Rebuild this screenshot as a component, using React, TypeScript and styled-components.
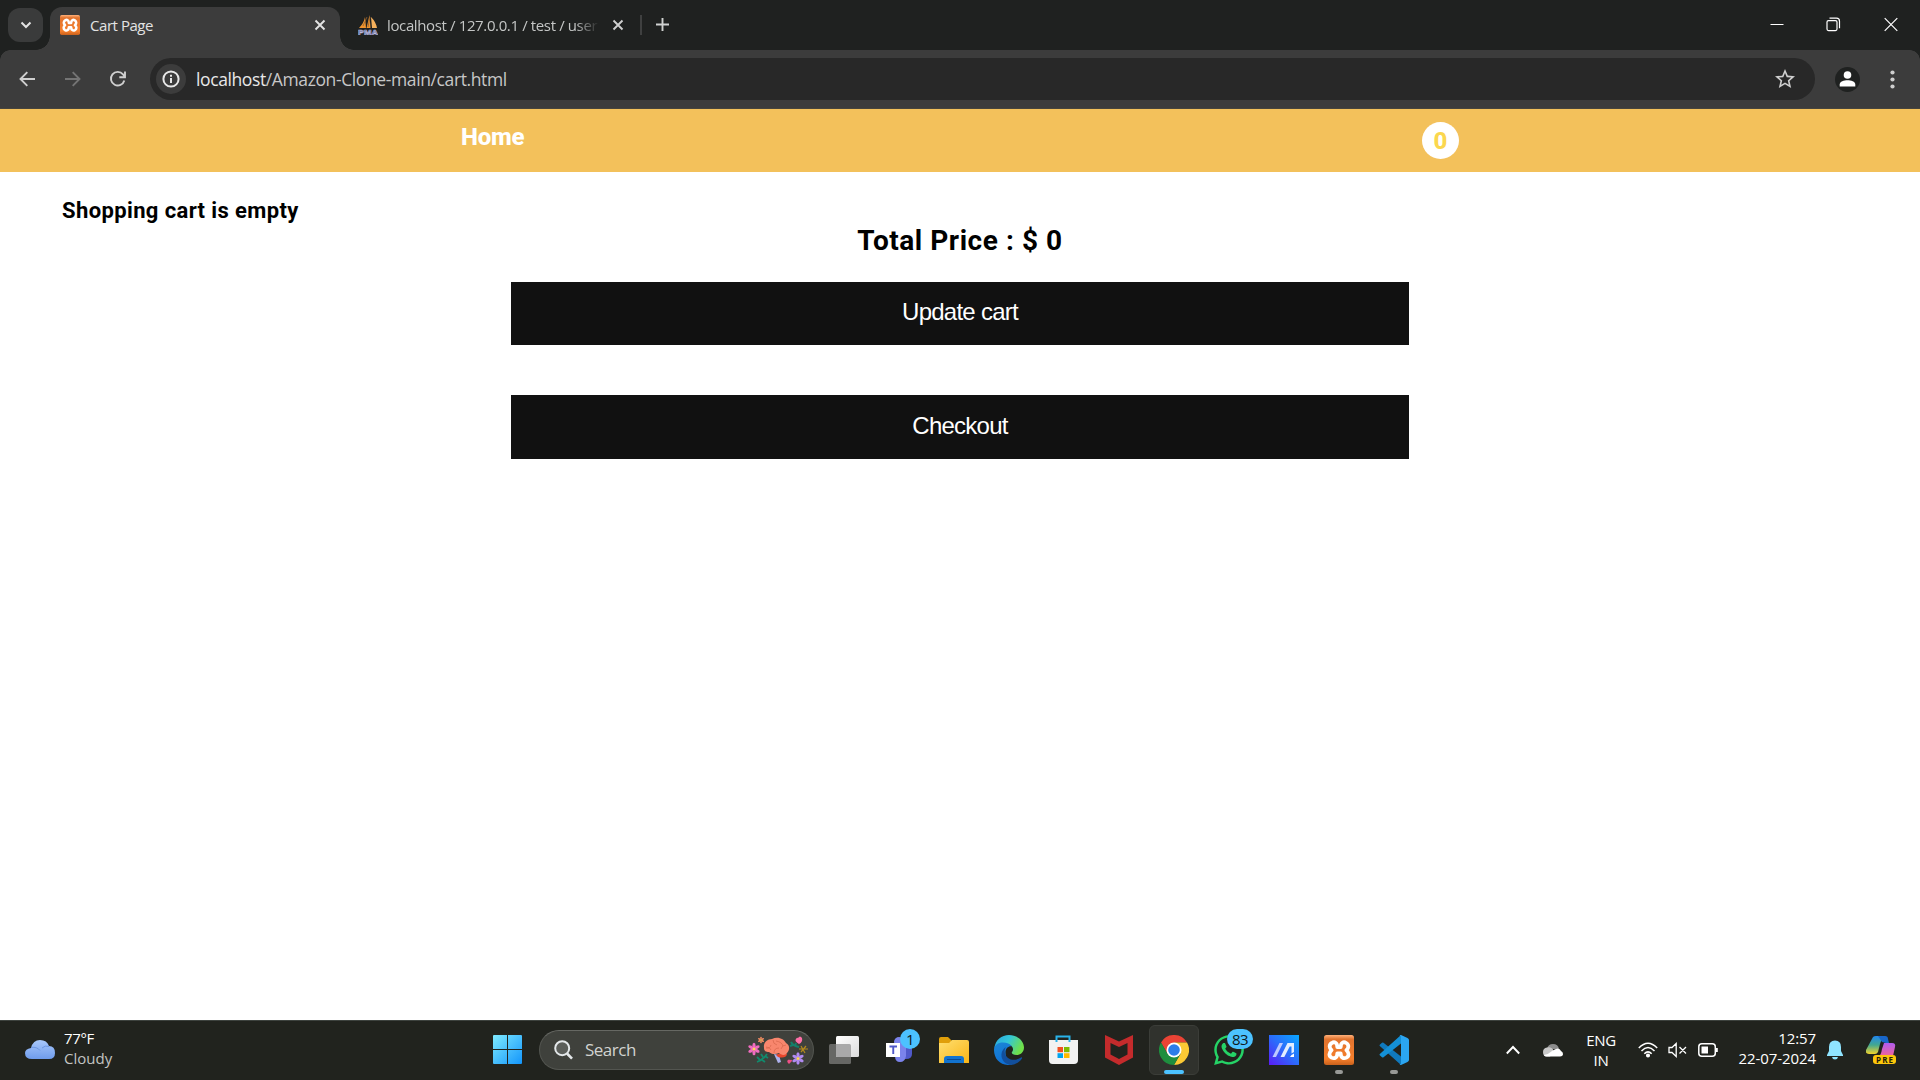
import React from 'react';
import styled, { createGlobalStyle } from 'styled-components';
import { MdStarBorder } from 'react-icons/md';
import { FaWhatsapp } from 'react-icons/fa';

const ui = '"Open Sans", "Noto Sans", sans-serif';

const GlobalStyle = createGlobalStyle`
  * { box-sizing: border-box; }
  body { margin: 0; background: #fff; overflow: hidden; }
  svg { display: block; flex: none; }
`;

const Screen = styled.div`
  width: 1920px;
  height: 1080px;
  display: flex;
  flex-direction: column;
  background: #fff;
  font-family: ${ui};
`;

const TabStrip = styled.div`
  height: 50px;
  display: flex;
  align-items: flex-start;
  background: #1f2120;
  color: #dedede;
`;

const TabSearch = styled.button`
  width: 35px;
  height: 34px;
  margin: 8px 7px 0 8px;
  padding: 0;
  border: 0;
  border-radius: 12px;
  background: #3a3b3b;
  display: grid;
  place-items: center;
`;

const Tab = styled.div<{ $active?: boolean }>`
  position: relative;
  width: ${p => (p.$active ? 290 : 298)}px;
  height: 43px;
  margin-top: 7px;
  padding: ${p => (p.$active ? '0 13px 7px 10px' : '0 13px 7px 18px')};
  display: flex;
  align-items: center;
  gap: ${p => (p.$active ? 10 : 9)}px;
  border-radius: 12px 12px 0 0;
  background: ${p => (p.$active ? '#3c3c3c' : 'transparent')};
  &::before, &::after {
    content: '';
    display: ${p => (p.$active ? 'block' : 'none')};
    position: absolute;
    bottom: 0;
    width: 14px;
    height: 14px;
  }
  &::before { left: -14px; background: radial-gradient(circle at 0 0, transparent 13.5px, #3c3c3c 14px); }
  &::after { right: -14px; background: radial-gradient(circle at 100% 0, transparent 13.5px, #3c3c3c 14px); }
`;

const TabTitle = styled.span<{ $spacing: number; $fade?: boolean }>`
  flex: 1;
  min-width: 0;
  white-space: nowrap;
  font-size: 15px;
  line-height: 22px;
  letter-spacing: ${p => p.$spacing}px;
  color: ${p => (p.$fade ? '#c4c6c5' : '#e3e3e3')};
  mask-image: ${p => (p.$fade ? 'linear-gradient(90deg, #000 188px, transparent 212px)' : 'none')};
`;

const TabDivider = styled.span`
  width: 2px;
  height: 20px;
  margin: 15px 13px 0 2px;
  background: #3f4040;
`;

const NewTab = styled.span`
  margin-top: 17px;
`;

const WindowControls = styled.div`
  margin: 17px 22px 0 auto;
  display: flex;
  gap: 43px;
  svg:first-child { margin-right: -1px; }
`;

const Toolbar = styled.div`
  height: 59px;
  display: flex;
  align-items: center;
  border-bottom: 1px solid #47443c;
  background: radial-gradient(circle at 10px 10px, #3c3c3c 9.5px, #1f2120 10px) 0 0 / 10px 10px no-repeat,
    radial-gradient(circle at 0 10px, #3c3c3c 9.5px, #1f2120 10px) 100% 0 / 10px 10px no-repeat, #3c3c3c;
`;

const NavIcons = styled.div`
  width: 150px;
  padding-left: 19px;
  display: flex;
  gap: 28px;
`;

const Omnibox = styled.div`
  width: 1665px;
  height: 42px;
  padding: 0 18px 0 6px;
  border-radius: 21px;
  background: #282828;
  display: flex;
  align-items: center;
  justify-content: space-between;
`;

const SiteInfo = styled.span`
  width: 30px;
  height: 30px;
  border-radius: 50%;
  background: #3c3c3c;
  display: grid;
  place-items: center;
`;

const Url = styled.span`
  flex: 1;
  margin-left: 10px;
  font-size: 17.5px;
  line-height: 26px;
  letter-spacing: -0.39px;
  color: #c7c7c7;
  b { font-weight: 400; color: #e8e8e8; }
`;

const Profile = styled.span`
  width: 25px;
  height: 25px;
  margin: 0 30px 0 20px;
  border-radius: 50%;
  background: #1f2120;
  display: grid;
  place-items: center;
`;

const Page = styled.main`
  flex: 1;
  font-family: Roboto, "Liberation Sans", sans-serif;
  color: #000;
`;

const SiteNav = styled.nav`
  height: 63px;
  padding: 13px 461px 0;
  display: flex;
  justify-content: space-between;
  align-items: flex-start;
  background: #f3c15b;
`;

const HomeLink = styled.a`
  margin-top: 1px;
  font-size: 24px;
  font-weight: 800;
  line-height: 28px;
  letter-spacing: -0.2px;
  color: #fff;
`;

const CartCount = styled.span`
  width: 37px;
  height: 37px;
  border-radius: 50%;
  background: #fff;
  color: #fbd74e;
  font-size: 24px;
  font-weight: 800;
  line-height: 38px;
  text-align: center;
`;

const EmptyNote = styled.h3`
  margin: 26px 0 0 62px;
  font-size: 22px;
  font-weight: 700;
  line-height: 26px;
  letter-spacing: 0.38px;
`;

const Total = styled.h2`
  margin: 0 0 24px;
  font-size: 28px;
  font-weight: 700;
  line-height: 34px;
  letter-spacing: 0.55px;
  text-align: center;
`;

const CartButton = styled.button<{ $height: number; $lift: number }>`
  display: block;
  width: 898px;
  height: ${p => p.$height}px;
  margin: 0 auto 50px;
  padding: 0 0 ${p => p.$lift}px;
  border: 0;
  background: #111;
  color: #fff;
  font: 24px "Liberation Sans", Arial, sans-serif;
  letter-spacing: -0.75px;
`;

const Taskbar = styled.footer`
  height: 60px;
  padding-bottom: 2px;
  display: flex;
  align-items: center;
  background: #21231e;
  border-top: 1px solid #3d423e;
  color: #fff;
`;

const Weather = styled.div`
  width: 493px;
  padding-left: 25px;
  display: flex;
  align-items: center;
  gap: 8px;
`;

const Lines = styled.div<{ $align?: string; $width?: number; $spacing?: number; $lift?: number }>`
  width: ${p => (p.$width ? `${p.$width}px` : 'auto')};
  padding-bottom: ${p => p.$lift || 0}px;
  font-size: 15px;
  line-height: 20px;
  letter-spacing: ${p => p.$spacing ?? -0.35}px;
  text-align: ${p => p.$align || 'left'};
  white-space: nowrap;
`;

const Muted = styled.div`
  color: #c3c4c2;
  letter-spacing: 0;
`;

const SearchPill = styled.div`
  width: 275px;
  height: 40px;
  margin: 0 5px 0 17px;
  padding: 0 5px 0 14px;
  border: 1px solid #535550;
  border-top-color: #666863;
  border-radius: 20px;
  background: #3f413c;
  display: flex;
  align-items: center;
`;

const SearchText = styled.span`
  flex: 1;
  margin-left: 12px;
  font-size: 17px;
  line-height: 24px;
  letter-spacing: -0.5px;
  color: #d2d3d0;
`;

const Apps = styled.div`
  display: flex;
  gap: 5px;
`;

const AppSlot = styled.div<{ $active?: boolean }>`
  position: relative;
  width: 50px;
  height: 50px;
  border-radius: 6px;
  border: 1px solid ${p => (p.$active ? '#3b3d38' : 'transparent')};
  background: ${p => (p.$active ? '#30322d' : 'transparent')};
  display: grid;
  place-items: center;
`;

const Running = styled.i<{ $wide?: boolean }>`
  position: absolute;
  bottom: 0;
  left: 50%;
  width: ${p => (p.$wide ? 20 : 8)}px;
  height: 4px;
  border-radius: 2px;
  background: ${p => (p.$wide ? '#4cc2ff' : '#989996')};
  transform: translateX(-50%);
`;

const Badge = styled.b<{ $width: number; $left: number }>`
  position: absolute;
  top: 3px;
  left: ${p => p.$left}px;
  width: ${p => p.$width}px;
  height: 20px;
  border-radius: 10px;
  background: #4cc2ff;
  color: #101820;
  font-weight: 400;
  font-size: 15px;
  line-height: 20px;
  letter-spacing: -0.6px;
  text-align: center;
`;

const Tray = styled.div`
  margin-left: auto;
  padding-right: 24px;
  display: flex;
  align-items: center;
`;

const Spacer = styled.span<{ $w: number }>`
  width: ${p => p.$w}px;
`;

const XamppBox = styled.span<{ $size: number }>`
  width: ${p => p.$size}px;
  height: ${p => p.$size}px;
  border-radius: ${p => p.$size / 12}px;
  background: linear-gradient(#ffb27c, #e2742f 14%, #f57f2c 80%, #c9611c);
  display: grid;
  place-items: center;
`;

const Xampp = ({ size }: { size: number }) => (
  <XamppBox $size={size}>
    <svg width={size} height={size} viewBox="0 0 30 30" fill="none" stroke="#fff" strokeWidth="3.8" strokeLinejoin="round">
      <path d="M7.800 8C10.500 6.300 13.300 7.800 13.300 12H16.700C16.700 7.800 19.500 6.300 22.200 8C25.200 9.800 24.800 13 22.400 15.200C25.200 17.800 25.400 21 22.400 22.600C19.500 24 16.700 22.600 16.700 18.400H13.300C13.300 22.600 10.500 24 7.600 22.600C4.600 21 4.800 17.800 7.600 15.200C5.200 13 4.800 9.800 7.800 8z" />
    </svg>
  </XamppBox>
);

const Cross = ({ color = '#e3e3e3' }: { color?: string }) => (
  <svg width="14" height="14" viewBox="0 0 14 14" stroke={color} strokeWidth="1.9">
    <path d="M2.500 2.500l9 9M11.500 2.500l-9 9" />
  </svg>
);

const PmaIcon = () => (
  <svg width="20" height="20" viewBox="0 0 20 20">
    <path d="M1 13Q6 8 7 2l1 11zM8.500 13Q10 7 11.500 0l1 13z" fill="#f0952f" />
    <path d="M13 2q5 5 6 11h-5z" fill="#f5b15c" />
    <path d="M5 11L9 2M10 12l2-10" stroke="#8f6130" strokeWidth=".8" />
    <text x="0" y="19.500" fontSize="8" fontWeight="700" fill="#3a3d78" stroke="#b9bbdf" strokeWidth=".6" textLength="20" lengthAdjust="spacingAndGlyphs" fontFamily="Liberation Sans">PMA</text>
  </svg>
);

const Back = ({ flip, color }: { flip?: boolean; color: string }) => (
  <svg width="17" height="18" viewBox="0 0 17 18" fill="none" stroke={color} strokeWidth="1.900">
    <path d={flip ? 'M1 9h14M8.700 2.200L15.500 9l-6.800 6.800' : 'M16 9H2M8.300 2.200L1.500 9l6.800 6.800'} />
  </svg>
);

const Reload = () => (
  <svg width="18" height="18" viewBox="0 0 18 18" fill="none" stroke="#cfcfcf" strokeWidth="1.900">
    <path d="M15.300 10.500A6.800 6.800 0 1 1 14 4.400l1.700 2M16 1.500v5.700h-5.700" />
  </svg>
);

const Flower = ({ x, y, r, c }: { x: number; y: number; r: number; c: string }) => (
  <g transform={`translate(${x} ${y})`}>
    {[0, 60, 120, 180, 240, 300].map(a => (
      <ellipse key={a} cx="0" cy={-r * 0.6} rx={r * 0.27} ry={r * 0.45} fill={c} transform={`rotate(${a})`} />
    ))}
    <circle r={r * 0.25} fill="#ffd75a" />
  </g>
);

const Brain = () => (
  <svg width="60" height="30" viewBox="0 0 60 30">
    <path d="M26 19l5 1 2 7-3 1z" fill="#aeb2ed" />
    <path d="M28 20q8-4 11-1-1 5-9 3z" fill="#e8462c" />
    <path d="M16 13c-1-6 4-9 8-9 6-3 12 0 14 4 4 2 4 7 1 10-2 3-6 2-8 0-4 2-8 1-10-1-3 0-5-1-5-4z" fill="#f8866d" />
    <path d="M18 13q4 1 5-3m2-5q0 4 4 5m-3 8q0-5 5-5m-3-7q6 1 7 5m3-1q-4 0-5 4m-15-2q4 0 5 3" fill="none" stroke="#d9694f" strokeWidth=".8" />
    <Flower x={6} y={14} r={6} c="#f16cc0" />
    <Flower x={13} y={5} r={3.200} c="#f08a62" />
    <Flower x={50} y={23.500} r={6} c="#b08af0" />
    <path d="M50 3q2-3 4 0 1 4-3 6-5-3-3-5 1-2 2-1z" fill="#ff6fa8" />
    <path d="M40 25q1-1 2 0 2-1 2 1l-3 3q-3-3-1-4z" fill="#ef4f86" />
    <path d="M9 27q6-2 10-8M12 25l-3-3M13 24l4 3M15 22l-2-3M17 21l3 2" stroke="#118a6c" strokeWidth="1.800" fill="none" />
    <path d="M43 7q2 4 8 5M45 10l-3 1M47 11l1-3" stroke="#157f6a" strokeWidth="2" fill="none" />
    <path d="M51 14h9M53 11l4 7M58 11l-5 6" stroke="#b58a1c" strokeWidth="1.200" />
  </svg>
);

const Edge = () => (
  <svg width="30" height="30" viewBox="0 0 30 30">
    <defs>
      <linearGradient id="eg1" x1="0" y1="0" x2="1" y2=".4"><stop offset="0" stopColor="#2aa5e0" /><stop offset=".5" stopColor="#33c6d8" /><stop offset="1" stopColor="#6fe04a" /></linearGradient>
      <linearGradient id="eg2" x1="0" y1="0" x2=".4" y2="1"><stop offset="0" stopColor="#1b86d6" /><stop offset="1" stopColor="#0f6fd4" /></linearGradient>
    </defs>
    <path d="M.3 13C1.500 5 7.500 0 15 0c9 0 15 6 15 12.500 0 5-4 7.500-7.500 7.500-3.500 0-5.500-1.500-4.500-3 3-4-1-8-6-8C6 9 2 11 .3 13z" fill="url(#eg1)" />
    <path d="M0 15C0 10 4 7.500 9 7.500c4 0 7 1.500 9 4-3-.8-6.500 1.500-6.500 6 0 6 4 10.500 7 12C8 32 0 25 0 15z" fill="url(#eg2)" />
    <path d="M12 12c-2 3-2 8 2 11 4 3 9 2 13-.5.8-.5 1.500.2 1 1C25 28 20 30 16 30 10 28.500 7 24 7.500 19c.3-3 2-5.500 4.500-7z" fill="#124f9c" />
  </svg>
);

const Chrome = () => (
  <svg width="30" height="30" viewBox="0 0 30 30">
    <path d="M2 7.500A15 15 0 0 1 28 7.500H15L8.500 18.750z" fill="#ea4335" />
    <path d="M28 7.500A15 15 0 0 1 15 30l6.500-11.250L15 7.500z" fill="#fcc934" />
    <path d="M15 30A15 15 0 0 1 2 7.500l6.500 11.250h13z" fill="#1e8e3e" />
    <circle cx="15" cy="15" r="7.500" fill="#fff" />
    <circle cx="15" cy="15" r="5.800" fill="#2b7de9" />
  </svg>
);

const VsCode = () => (
  <svg width="30" height="30" viewBox="0 0 30 30">
    <path d="M1 9.500l2-1.700q.8-.5 1.500 0L22 21.500V30L.8 11q-.8-.8.2-1.500z" fill="#1079bd" />
    <path d="M1 20.500l2 1.700q.8.500 1.500 0L22 8.500V0L.8 19q-.8.800.2 1.500z" fill="#1490d6" />
    <path d="M22 0l6.500 3Q30 3.800 30 5v20q0 1.200-1.500 2L22 30q-1 .2-1.500-.5.900.3 1.500-1V1.500q-.5-1.200-1.500-1Q21-.2 22 0z" fill="#2ba6f2" />
  </svg>
);

const apps: { name: string; icon: React.ReactNode; active?: boolean; running?: boolean; badge?: [string, number, number] }[] = [
  {
    name: 'tasks',
    icon: (
      <svg width="30" height="30" viewBox="0 0 30 30">
        <defs><linearGradient id="tv" x1="0" y1="0" x2="1" y2="1"><stop stopColor="#fff" /><stop offset="1" stopColor="#dcdcdc" /></linearGradient></defs>
        <rect x="0" y="9" width="22" height="20" rx="1.500" fill="#666764" />
        <rect x="7" y="1" width="23" height="21" rx="1.500" fill="url(#tv)" />
        <path d="M7 9h13.500q1.500 0 1.500 1.500V22H8.500Q7 22 7 20.500z" fill="#a9a9a9" />
      </svg>
    ),
  },
  {
    name: 'teams',
    badge: ['1', 20, 25],
    icon: (
      <svg width="30" height="30" viewBox="0 0 30 30">
        <circle cx="15" cy="7" r="5" fill="#7b83eb" />
        <path d="M18 10h10v9q0 5-6 5h-4z" fill="#5059c9" />
        <path d="M11 10h11v11q-1 6-6 6-5 0-5-6z" fill="#7b83eb" />
        <rect x="2" y="8" width="14" height="14" fill="#fff" />
        <path d="M5.500 11.500h7.500M9.250 11.500V19" stroke="#5059c9" strokeWidth="1.900" />
      </svg>
    ),
  },
  {
    name: 'files',
    icon: (
      <svg width="30" height="30" viewBox="0 0 30 30">
        <defs><linearGradient id="fo" x1="0" y1="0" x2="1" y2="1"><stop stopColor="#ffdf70" /><stop offset="1" stopColor="#f9b517" /></linearGradient></defs>
        <path d="M0 4q0-2 2-2h7l4 4v6H0z" fill="#e09f0a" />
        <path d="M0 8h10l3-3h15q2 0 2 2v21H0z" fill="url(#fo)" />
        <path d="M5 28v-4q0-3 3-3h14q3 0 3 3v4z" fill="#1273cf" />
        <path d="M8 24.500h14" stroke="#0b4a93" />
      </svg>
    ),
  },
  { name: 'edge', icon: <Edge /> },
  {
    name: 'store',
    icon: (
      <svg width="30" height="30" viewBox="1 0 30 30">
        <path d="M8.500 7V1.500h13V7" fill="none" stroke="#29b3ea" strokeWidth="2" />
        <path d="M1 5h29v20q0 4-4 4H4.500Q1 29 1 25z" fill="#f2f2f2" />
        <path d="M8.500 5v2M21.500 5v2" stroke="#29b3ea" strokeWidth="2" />
        <path d="M9.500 12h5.500v5.200H9.500z" fill="#f25022" /><path d="M16 12h5.500v5.200H16z" fill="#7fba00" />
        <path d="M9.500 18.200h5.500V23H9.500z" fill="#00a4ef" /><path d="M16 18.200h5.500V23H16z" fill="#ffb900" />
      </svg>
    ),
  },
  {
    name: 'mcafee',
    icon: (
      <svg width="30" height="30" viewBox="0 0 30 30">
        <path d="M1 0l14 6.500L29 0v22.500L15 30 1 22.500zm5.500 8v11.500l8.500 4.500 8.500-4.500V8L15 12z" fill="#c42b2c" fillRule="evenodd" />
      </svg>
    ),
  },
  { name: 'chrome', icon: <Chrome />, active: true },
  { name: 'whatsapp', badge: ['83', 26, 22], icon: <FaWhatsapp size={34} color="#25d366" /> },
  {
    name: 'myasus',
    icon: (
      <svg width="30" height="30" viewBox="0 0 30 30">
        <defs><linearGradient id="ma" x1="0" y1="1" x2="1" y2="0"><stop stopColor="#5b1bf5" /><stop offset=".5" stopColor="#2b6cfb" /><stop offset="1" stopColor="#08a7ff" /></linearGradient></defs>
        <path d="M0 0h30v30H0z" fill="url(#ma)" />
        <path d="M3.500 22L10.500 8H14L7 22z" fill="#bcc9ff" />
        <path d="M11.500 22L18.500 8H25v9l-2.500 1.500V11.500H20.700L15.300 22z" fill="#e2edff" />
        <path d="M22.500 20l2.500-1.500V22h-4z" fill="#fff" />
      </svg>
    ),
  },
  { name: 'xampp', icon: <Xampp size={30} />, running: true },
  { name: 'vscode', icon: <VsCode />, running: true },
];

export default function App() {
  return (
    <Screen>
      <GlobalStyle />
      <TabStrip>
        <TabSearch>
          <svg width="12" height="8" viewBox="0 0 12 8" fill="none" stroke="#e3e3e3" strokeWidth="2"><path d="M1.500 1.500L6 6l4.500-4.500" /></svg>
        </TabSearch>
        <Tab $active>
          <Xampp size={20} />
          <TabTitle $spacing={-0.45}>Cart Page</TabTitle>
          <Cross />
        </Tab>
        <Tab>
          <PmaIcon />
          <TabTitle $spacing={-0.37} $fade>localhost / 127.0.0.1 / test / user</TabTitle>
          <Cross color="#cfcfcf" />
        </Tab>
        <TabDivider />
        <NewTab>
          <svg width="15" height="15" viewBox="0 0 15 15" stroke="#d0d2d1" strokeWidth="1.900"><path d="M7.500 1v13M1 7.500h13" /></svg>
        </NewTab>
        <WindowControls>
          <svg width="14" height="15" viewBox="0 0 14 15" stroke="#fff"><path d="M.5 7.500h13" /></svg>
          <svg width="15" height="15" viewBox="0 0 15 15" fill="none" stroke="#fff" strokeWidth="1.200">
            <path d="M3.500 1.200h7q3 0 3 3v7" /><rect x="1" y="3.600" width="10" height="10" rx="1.500" />
          </svg>
          <svg width="14" height="15" viewBox="0 0 14 15" stroke="#fff" strokeWidth="1.200"><path d="M.7 1.200l12.600 12.600M13.300 1.200L.7 13.800" /></svg>
        </WindowControls>
      </TabStrip>
      <Toolbar>
        <NavIcons>
          <Back color="#cfcfcf" />
          <Back flip color="#747474" />
          <Reload />
        </NavIcons>
        <Omnibox>
          <SiteInfo>
            <svg width="18" height="18" viewBox="0 0 18 18" fill="none" stroke="#e8e8e8" strokeWidth="2">
              <circle cx="9" cy="9" r="7.600" /><path d="M9 8v5M9 4.700v2" />
            </svg>
          </SiteInfo>
          <Url><b>localhost</b>/Amazon-Clone-main/cart.html</Url>
          <MdStarBorder size={24} color="#cfcfcf" />
        </Omnibox>
        <Profile>
          <svg width="17" height="16" viewBox="0 0 17 16" fill="#fff"><circle cx="8.500" cy="4" r="3.800" /><path d="M.7 15.500v-2C.7 10.500 5 9.300 8.500 9.300s7.800 1.200 7.800 4.200v2z" /></svg>
        </Profile>
        <svg width="5" height="19" viewBox="0 0 5 19" fill="#cfcfcf"><circle cx="2.500" cy="2.500" r="2.100" /><circle cx="2.500" cy="9.500" r="2.100" /><circle cx="2.500" cy="16.500" r="2.100" /></svg>
      </Toolbar>
      <Page>
        <SiteNav>
          <HomeLink>Home</HomeLink>
          <CartCount>0</CartCount>
        </SiteNav>
        <EmptyNote>Shopping cart is empty</EmptyNote>
        <Total>Total Price : $ 0</Total>
        <CartButton $height={63} $lift={4}>Update cart</CartButton>
        <CartButton $height={64} $lift={2}>Checkout</CartButton>
      </Page>
      <Taskbar>
        <Weather>
          <svg width="31" height="20" viewBox="0 0 31 20">
            <defs><linearGradient id="cl" x1="0" y1="0" x2="0" y2="1"><stop stopColor="#a9c8fb" /><stop offset="1" stopColor="#6f9cec" /></linearGradient></defs>
            <path d="M6 8Q8 0 15 0q7 0 9 6 6 0 6 7 0 6-6 6H7q-7 0-7-6 0-4 6-5z" fill="url(#cl)" />
            <path d="M6 7.500q6-1 9 3M17 8q3-3 7-1.500" stroke="#6d97e3" fill="none" />
          </svg>
          <Lines $lift={3}>77°F<Muted>Cloudy</Muted></Lines>
        </Weather>
        <svg width="29" height="29" viewBox="0 0 29 29">
          <defs><linearGradient id="wn" x1="0" y1="0" x2="29" y2="29" gradientUnits="userSpaceOnUse"><stop stopColor="#7eeaff" /><stop offset="1" stopColor="#1395fb" /></linearGradient></defs>
          <path d="M1 0h13v14H0V1q0-1 1-1zM15 0h13q1 0 1 1v13H15zM0 15h14v14H1q-1 0-1-1zM15 15h14v13q0 1-1 1H15z" fill="url(#wn)" />
        </svg>
        <SearchPill>
          <svg width="19" height="20" viewBox="0 0 19 20" fill="#5b5e5a" stroke="#e4e8ea" strokeWidth="2"><circle cx="8.200" cy="8.200" r="7" /><path d="M13 13.500l5 5.200" strokeWidth="2.600" /></svg>
          <SearchText>Search</SearchText>
          <Brain />
        </SearchPill>
        <Apps>
          {apps.map(a => (
            <AppSlot key={a.name} $active={a.active}>
              {a.icon}
              {a.badge && <Badge $width={a.badge[1]} $left={a.badge[2]}>{a.badge[0]}</Badge>}
              {(a.active || a.running) && <Running $wide={a.active} />}
            </AppSlot>
          ))}
        </Apps>
        <Tray>
          <svg width="14" height="10" viewBox="0 0 14 10" fill="none" stroke="#fff" strokeWidth="1.900"><path d="M.8 8.500L7 2l6.200 6.500" /></svg>
          <Spacer $w={23} />
          <svg width="20" height="14" viewBox="0 0 20 14">
            <path d="M4 6q1-5 6-5 5 0 6 5z" fill="#8d8d8d" /><path d="M4 4.500q5-1 7 4l-4 5H4q-4 0-4-4.500 0-4 4-4.500z" fill="#c8c8c8" />
            <path d="M5 13.500q-4 0-4-1.500 5-1 8-4 7-5 9 0 2 1 2 3t-3 2.500z" fill="#fff" />
          </svg>
          <Spacer $w={23} />
          <Lines $align="center" $width={30}>ENG<br />IN</Lines>
          <Spacer $w={22} />
          <svg width="20" height="16" viewBox="0 0 20 16" fill="none" stroke="#fff" strokeWidth="1.500">
            <path d="M.8 6Q10-3.600 19.200 6M3.500 9Q10 2.200 16.500 9M6.300 11.700q3.700-3.600 7.400 0" /><circle cx="10" cy="13.500" r="1.300" fill="#fff" />
          </svg>
          <Spacer $w={10} />
          <svg width="19" height="16" viewBox="0 0 19 16" fill="none" stroke="#fff" strokeWidth="1.300"><path d="M1 5.500h3L8.200 1.500v13L4 10.500H1zM11.500 5l6.500 6.500M18 5l-6.500 6.500" /></svg>
          <Spacer $w={11} />
          <svg width="20" height="14" viewBox="0 0 20 14" fill="none" stroke="#fff" strokeWidth="1.500"><rect x=".8" y=".8" width="16.500" height="12.400" rx="3" /><path d="M3.500 3.500h6.500v7H3.500z" fill="#fff" stroke="none" /><path d="M18.800 5v4" strokeWidth="2" /></svg>
          <Spacer $w={18} />
          <Lines $align="right" $width={80} $spacing={-0.08} $lift={3}>12:57<br />22-07-2024</Lines>
          <Spacer $w={11} />
          <svg width="16" height="20" viewBox="0 0 16 20" fill="#8fe4ff"><path d="M8 .5q6 0 6 6.500v4l2 4v1H0v-1l2-4V7Q2 .5 8 .5zM5 17h6q-.5 2.500-3 2.500T5 17z" /></svg>
          <Spacer $w={23} />
          <svg width="30" height="30" viewBox="0 0 30 30">
            <defs>
              <linearGradient id="cp1" x1="0" y1="0" x2="0" y2="1"><stop stopColor="#2187ee" /><stop offset=".5" stopColor="#43a88f" /><stop offset="1" stopColor="#f3d32b" /></linearGradient>
              <linearGradient id="cp2" x1="0" y1="0" x2="0" y2="1"><stop stopColor="#b05cf0" /><stop offset="1" stopColor="#f0649a" /></linearGradient>
            </defs>
            <path d="M7 2q1-1 3-1h10q-4 1-6 8l-2 8q-1 2-3 2H3q-4 0-3-4z" fill="url(#cp1)" />
            <path d="M12 1h7q3 0 3 3l1 4h-3l-4-1z" fill="#1866c9" />
            <path d="M18 8h8q4 0 3 4l-2 9H13q2-1 3-7z" fill="url(#cp2)" />
            <rect x="7" y="20" width="23" height="9" rx="3" fill="#fdc60b" />
            <text x="10" y="27.500" fontSize="8" fontWeight="700" fill="#211c08" fontFamily="Open Sans" textLength="17">PRE</text>
          </svg>
        </Tray>
      </Taskbar>
    </Screen>
  );
}
